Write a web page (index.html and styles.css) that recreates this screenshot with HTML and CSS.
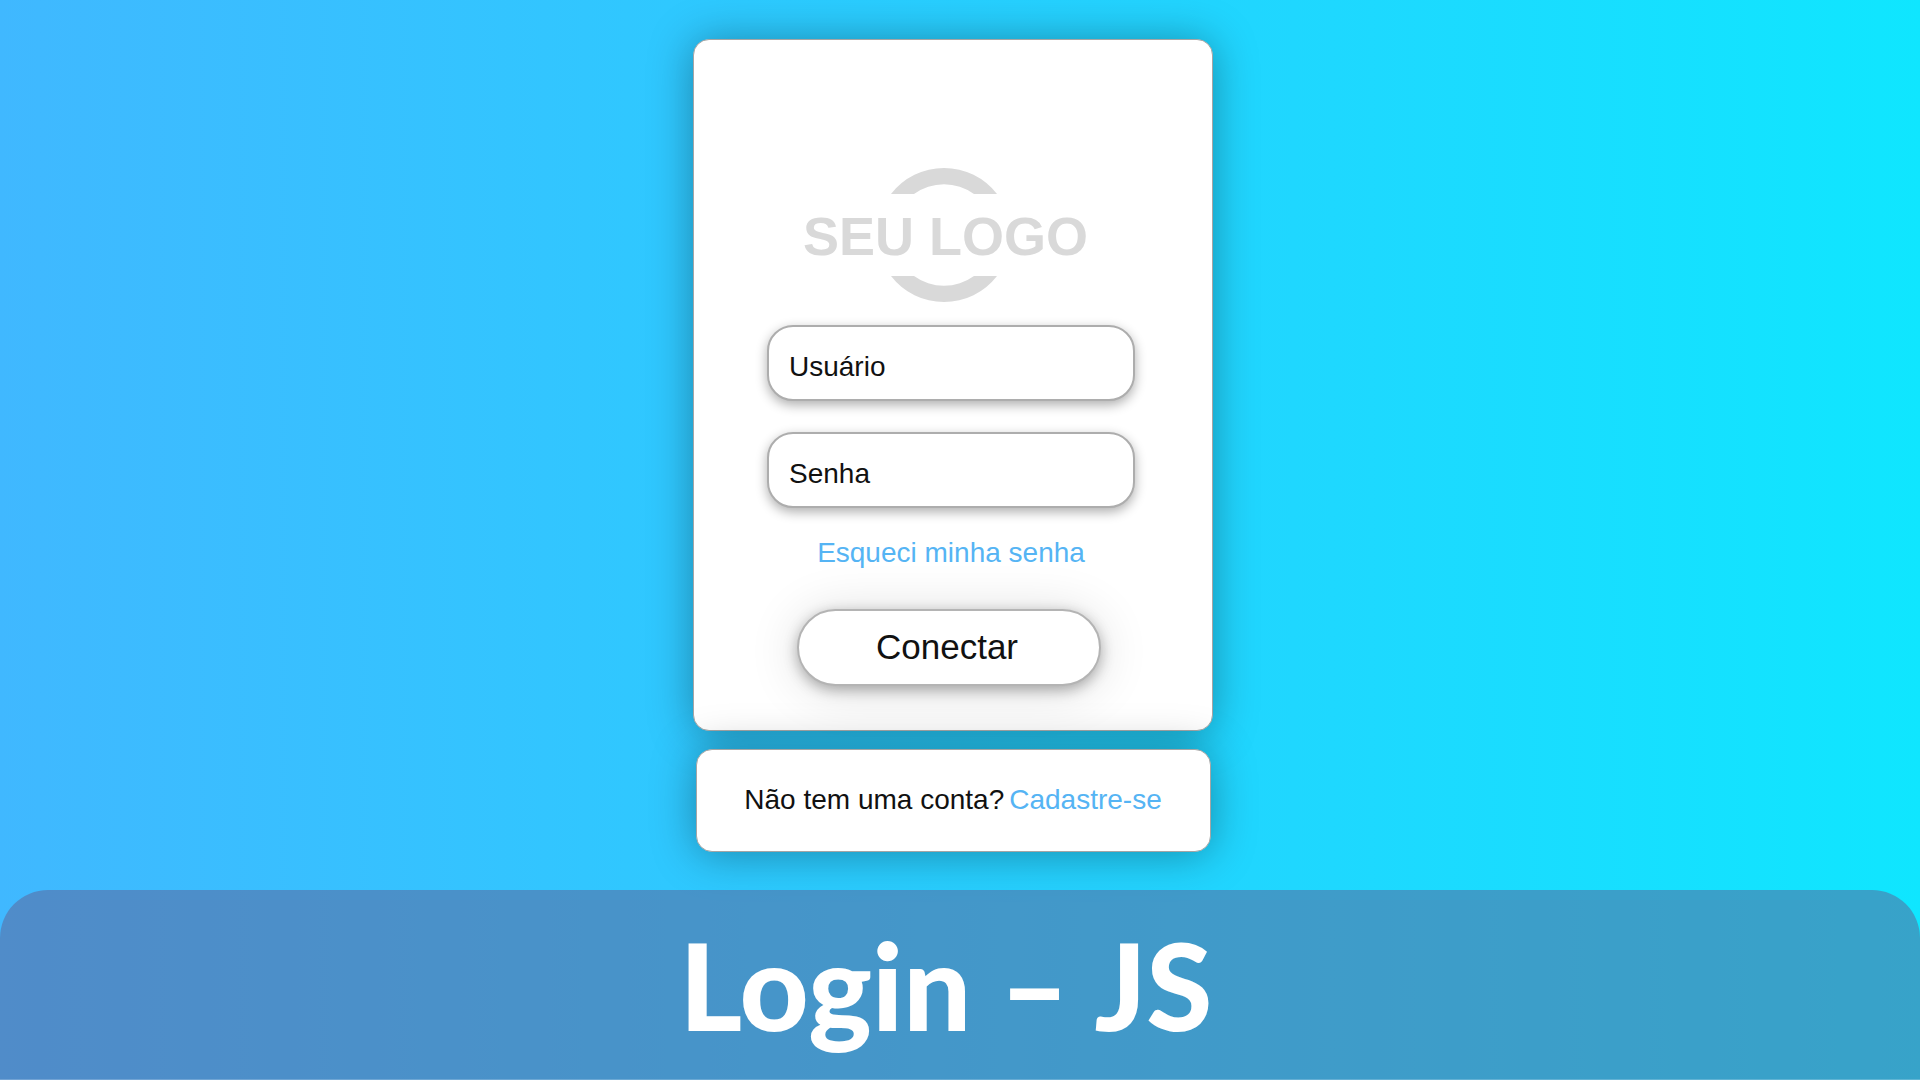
FILE: index.html
```html
<!DOCTYPE html>
<html lang="pt-BR">
<head>
  <meta charset="utf-8">
  <meta name="viewport" content="width=device-width, initial-scale=1">
  <title>Login – JS</title>
  <link rel="stylesheet" href="styles.css">
</head>
<body>
  <main class="page">
    <form class="card login">
      <svg class="logo" viewBox="0 0 300 136" role="img" aria-label="Seu logo">
        <path d="M90 27 A67 67 0 0 1 196 27 H173 A51 51 0 0 0 113 27 Z"/>
        <path d="M90 109 A67 67 0 0 0 196 109 H173 A51 51 0 0 1 113 109 Z"/>
        <text x="2" y="88">SEU LOGO</text>
      </svg>
      <input class="field" type="text" placeholder="Usuário" aria-label="Usuário">
      <input class="field" type="password" placeholder="Senha" aria-label="Senha">
      <a class="link" href="#">Esqueci minha senha</a>
      <button class="submit" type="button">Conectar</button>
    </form>
    <section class="card signup">
      <span>Não tem uma conta?</span>
      <a class="link" href="#">Cadastre-se</a>
    </section>
  </main>
  <footer class="banner">
    <h1 class="title">Login – JS</h1>
  </footer>
</body>
</html>
```

FILE: styles.css
```css
* {
  box-sizing: border-box;
}

body {
  margin: 0;
  min-height: 100vh;
  display: flex;
  flex-direction: column;
  background: linear-gradient(90deg, #40b8ff, #0fe6ff);
  color: #111;
  font-family: "Liberation Sans", Arial, sans-serif;
  font-size: 28px;
  line-height: 32px;
}

.page {
  display: flex;
  flex-direction: column;
  align-items: center;
  gap: 18px;
  padding: 39px 14px 38px 0;
}

.card {
  display: flex;
  width: 100%;
  background: #fff;
  border: 1px solid #a5a5a5;
  border-radius: 16px;
  box-shadow: 0 2px 44px rgba(0, 0, 0, 0.34);
}

.login {
  max-width: 520px;
  flex-direction: column;
  align-items: center;
  padding: 127px 4px 44px 0;
}

.logo {
  width: 300px;
  height: 136px;
  margin-bottom: 22px;
  fill: #d9d9d9;
  font-size: 54px;
  font-weight: bold;
}

.field {
  width: 368px;
  max-width: 90%;
  height: 76px;
  margin-bottom: 31px;
  padding: 8px 20px 0;
  border: 2px solid #adadad;
  border-radius: 26px;
  background: #fff;
  box-shadow: 0 4px 12px rgba(0, 0, 0, 0.32);
  color: inherit;
  font: inherit;
}

.field::placeholder {
  color: #111;
  opacity: 1;
}

.link {
  color: #55b4f4;
  text-decoration: none;
}

.login .link {
  margin-top: -2px;
}

.submit {
  width: 304px;
  max-width: 90%;
  height: 77px;
  margin: 40px 4px 0 0;
  padding: 0 4px 2px 0;
  border: 2px solid #b4b4b4;
  border-radius: 39px;
  background: #fff;
  box-shadow: 0 4px 14px rgba(0, 0, 0, 0.3), 0 4px 52px rgba(0, 0, 0, 0.14);
  color: inherit;
  font-family: inherit;
  font-size: 35px;
}

.signup {
  max-width: 515px;
  justify-content: center;
  gap: 5px;
  padding: 34px 0 35px;
}

.banner {
  flex: 1;
  display: flex;
  align-items: center;
  justify-content: center;
  padding-right: 28px;
  border-bottom: 1px solid rgba(255, 255, 255, 0.2);
  border-radius: 48px 48px 0 0;
  background: rgba(96, 95, 147, 0.5);
}

.title {
  margin: 0;
  color: #fff;
  font-family: Lato, "Liberation Sans", Arial, sans-serif;
  font-size: 120px;
  font-weight: 900;
  line-height: 160px;
}
```
